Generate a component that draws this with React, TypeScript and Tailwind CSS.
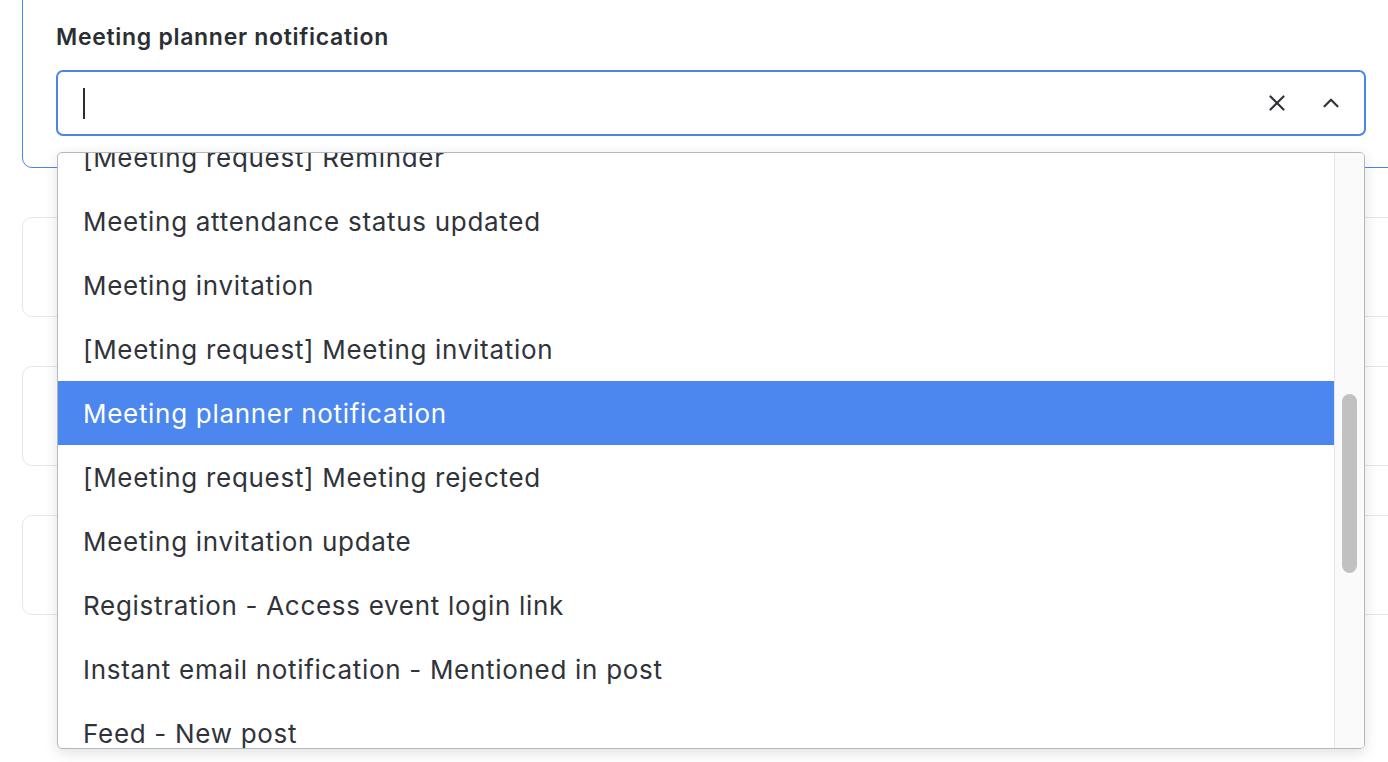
import { X, ChevronUp } from "lucide-react";

const options = [
  "[Meeting request] Reminder",
  "Meeting attendance status updated",
  "Meeting invitation",
  "[Meeting request] Meeting invitation",
  "Meeting planner notification",
  "[Meeting request] Meeting rejected",
  "Meeting invitation update",
  "Registration - Access event login link",
  "Instant email notification - Mentioned in post",
  "Feed - New post",
];

const selected = "Meeting planner notification";

export default function App() {
  return (
    <div
      className="h-[762px] w-[1388px] overflow-hidden bg-white"
      style={{ fontFamily: "Inter, 'Noto Sans', sans-serif" }}
    >
      <div className="flex w-[1378px] flex-col gap-[49px] ml-[22px] -mt-[20px]">
        {/* Active card */}
        <div className="relative z-10 rounded-[10px] border border-[#4a86e8] px-[33px] pt-[40px] pb-[31px]">
          <label className="block text-[23px] font-semibold leading-[32px] tracking-[0.7px] text-[#2b2f33]">
            Meeting planner notification
          </label>
          <div className="relative mt-[17px]">
            <div className="flex h-[66px] items-center rounded-[7px] border-2 border-[#4a86e8] bg-white pl-[25px] pr-[20px]">
              <div className="h-[31px] w-[2px] bg-[#2b2f33]" />
              <div className="ml-auto flex items-center gap-[28px] text-[#30343a]">
                <X className="h-[26px] w-[26px]" strokeWidth={2} />
                <ChevronUp className="h-[26px] w-[26px]" strokeWidth={2} />
              </div>
            </div>

            {/* Dropdown menu */}
            <div className="absolute left-[1px] right-[1px] top-[82px] flex h-[597px] overflow-hidden rounded-[5px] border border-[#b3b8bf] bg-white shadow-[0_4px_14px_rgba(0,0,0,0.12)]">
              <ul className="-mt-[28px] flex-1">
                {options.map((o) => (
                  <li
                    key={o}
                    className={
                      o === selected
                        ? "flex h-[64px] items-center bg-[#4b87ef] pl-[25px] text-[26px] tracking-[0.7px] text-white"
                        : "flex h-[64px] items-center pl-[25px] text-[26px] tracking-[0.7px] text-[#30343a]"
                    }
                  >
                    {o}
                  </li>
                ))}
              </ul>
              <div className="w-[30px] border-l border-[#e6e6e6] bg-[#fafafa] px-[7px] pt-[241px]">
                <div className="h-[179px] rounded-full bg-[#c1c1c1]" />
              </div>
            </div>
          </div>
        </div>

        {/* Cards behind the menu */}
        <div className="h-[100px] rounded-[10px] border border-[#e5e7eb]" />
        <div className="h-[100px] rounded-[10px] border border-[#e5e7eb]" />
        <div className="h-[100px] rounded-[10px] border border-[#e5e7eb]" />
      </div>
    </div>
  );
}
